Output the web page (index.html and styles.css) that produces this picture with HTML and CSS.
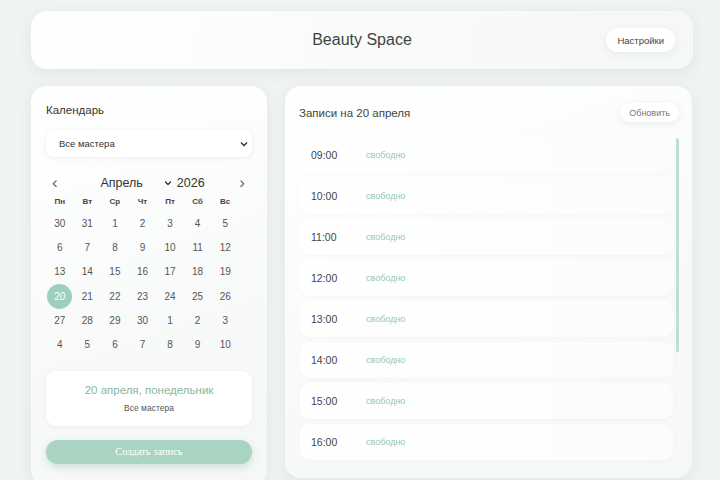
FILE: index.html
```html
<!DOCTYPE html>
<html lang="ru">

<head>
    <meta charset="UTF-8">
    <meta name="viewport" content="width=device-width, initial-scale=1.0">
    <title>Beauty Space</title>
    <link rel="stylesheet" href="styles.css">
</head>

<body>
    <header class="topbar">
        <h1>Beauty Space</h1>
        <button class="pill settings">Настройки</button>
    </header>

    <div class="layout">
        <section class="card calendar-card">
            <h2>Календарь</h2>
            <div class="select">
                <span>Все мастера</span>
                <svg width="8" height="6" viewBox="0 0 8 6"><path d="M1 1.5l3 3 3-3" fill="none" stroke="#333" stroke-width="1.4"/></svg>
            </div>

            <div class="cal-nav">
                <span class="arrow">‹</span>
                <div class="cal-title">
                    <span class="month">Апрель</span>
                    <svg width="8" height="6" viewBox="0 0 8 6"><path d="M1 1.5l3 3 3-3" fill="none" stroke="#333" stroke-width="1.3"/></svg>
                    <span class="year">2026</span>
                </div>
                <span class="arrow">›</span>
            </div>

            <div class="cal-week">
                <div>Пн</div><div>Вт</div><div>Ср</div><div>Чт</div><div>Пт</div><div>Сб</div><div>Вс</div>
            </div>
            <div class="cal-days">
                <div>30</div><div>31</div><div>1</div><div>2</div><div>3</div><div>4</div><div>5</div>
                <div>6</div><div>7</div><div>8</div><div>9</div><div>10</div><div>11</div><div>12</div>
                <div>13</div><div>14</div><div>15</div><div>16</div><div>17</div><div>18</div><div>19</div>
                <div><span class="selected">20</span></div><div>21</div><div>22</div><div>23</div><div>24</div><div>25</div><div>26</div>
                <div>27</div><div>28</div><div>29</div><div>30</div><div>1</div><div>2</div><div>3</div>
                <div>4</div><div>5</div><div>6</div><div>7</div><div>8</div><div>9</div><div>10</div>
            </div>

            <div class="day-info">
                <div class="day-date">20 апреля, понедельник</div>
                <div class="day-master">Все мастера</div>
            </div>

            <button class="create">Создать запись</button>
        </section>

        <section class="card records-card">
            <div class="records-head">
                <h2>Записи на 20 апреля</h2>
                <button class="pill refresh">Обновить</button>
            </div>
            <div class="slots">
                <div class="slot"><span class="time">09:00</span><span class="status">свободно</span></div>
                <div class="slot"><span class="time">10:00</span><span class="status">свободно</span></div>
                <div class="slot"><span class="time">11:00</span><span class="status">свободно</span></div>
                <div class="slot"><span class="time">12:00</span><span class="status">свободно</span></div>
                <div class="slot"><span class="time">13:00</span><span class="status">свободно</span></div>
                <div class="slot"><span class="time">14:00</span><span class="status">свободно</span></div>
                <div class="slot"><span class="time">15:00</span><span class="status">свободно</span></div>
                <div class="slot"><span class="time">16:00</span><span class="status">свободно</span></div>
            </div>
            <div class="scroll-thumb"></div>
        </section>
    </div>
</body>

</html>
```

FILE: styles.css
```css
body {
    font-family: "Liberation Sans", Arial, sans-serif;
    background-color: #eff3f1;
    color: #444;
    margin: 0;
    padding: 11px 27px 0 31px;
    height: 480px;
    box-sizing: border-box;
    overflow: hidden;
}

.topbar {
    height: 58px;
    box-sizing: border-box;
    background: linear-gradient(100deg, #ffffff 0%, #f9fbfa 50%, #f5f8f7 100%);
    border-radius: 16px;
    box-shadow: 0 4px 14px rgba(80, 110, 95, 0.08);
    display: flex;
    align-items: center;
    justify-content: center;
    position: relative;
}

.topbar h1 {
    margin: 0;
    font-size: 16px;
    font-weight: normal;
    color: #3e4442;
}

.pill {
    font-family: "Liberation Sans", Arial, sans-serif;
    background-color: #fff;
    border: none;
    border-radius: 14px;
    box-shadow: 0 2px 8px rgba(80, 110, 95, 0.1);
    color: #444;
    cursor: pointer;
}

.settings {
    position: absolute;
    right: 18px;
    top: 17px;
    height: 24px;
    padding: 0 11px;
    font-size: 9.5px;
}

.layout {
    display: grid;
    grid-template-columns: 236px 407px;
    column-gap: 18px;
    margin-top: 17px;
}

.card {
    background: linear-gradient(160deg, #ffffff 0%, #f8faf9 60%, #f5f8f7 100%);
    border-radius: 16px;
    box-shadow: 0 4px 14px rgba(80, 110, 95, 0.08);
    height: 392px;
    box-sizing: border-box;
    position: relative;
}

.calendar-card {
    padding: 18px 15px 0 15px;
    height: 400px;
}

.card h2 {
    margin: 0;
    font-size: 11.5px;
    font-weight: normal;
    color: #333;
}

.select {
    margin-top: 14px;
    height: 27px;
    background-color: #fff;
    border-radius: 8px;
    box-shadow: 0 1px 5px rgba(80, 110, 95, 0.1);
    display: flex;
    align-items: center;
    justify-content: space-between;
    padding: 0 4px 0 13px;
    font-size: 9.5px;
    color: #333;
}

.cal-nav {
    display: flex;
    justify-content: space-between;
    align-items: center;
    margin-top: 18px;
    padding: 0 7px 0 6px;
    height: 16px;
}

.arrow {
    font-size: 17px;
    color: #666;
    line-height: 16px;
}

.cal-title {
    display: flex;
    align-items: center;
    font-size: 12.5px;
    color: #333;
    margin-left: 8px;
}

.cal-title svg {
    margin: 0 5px 0 21px;
}

.cal-week,
.cal-days {
    width: 193px;
    display: grid;
    grid-template-columns: repeat(7, 1fr);
}

.cal-week {
    margin-top: 3px;
    height: 14px;
    align-items: center;
    text-align: center;
    font-size: 8px;
    font-weight: bold;
    color: #444;
}

.cal-days {
    margin-top: 3px;
    grid-auto-rows: 24.3px;
    font-size: 10px;
    color: #555;
}

.cal-days div {
    display: flex;
    align-items: center;
    justify-content: center;
}

.selected {
    width: 25px;
    height: 25px;
    border-radius: 50%;
    background-color: #9ccfbc;
    color: #fff;
    display: flex;
    align-items: center;
    justify-content: center;
}

.day-info {
    margin-top: 14px;
    height: 55px;
    box-sizing: border-box;
    background-color: #fff;
    border-radius: 10px;
    box-shadow: 0 1px 6px rgba(80, 110, 95, 0.08);
    text-align: center;
    padding-top: 13px;
}

.day-date {
    font-size: 11.5px;
    color: #86b8a3;
}

.day-master {
    font-size: 8.5px;
    color: #555;
    margin-top: 7px;
}

.create {
    margin-top: 14px;
    width: 100%;
    height: 24px;
    border: none;
    border-radius: 12px;
    background-color: #a8d4c1;
    color: #fff;
    font-family: "Liberation Serif", serif;
    font-size: 10.5px;
    box-shadow: 0 3px 8px rgba(100, 160, 135, 0.3);
}

.records-card {
    padding: 17px 14px 0 14px;
}

.records-head {
    display: flex;
    justify-content: space-between;
    align-items: center;
    height: 19px;
}

.records-card h2 {
    margin-top: 1px;
    color: #444;
}

.refresh {
    height: 19px;
    padding: 0 9px;
    font-size: 9px;
    color: #777;
    margin-right: -1px;
}

.slots {
    margin-top: 15px;
    height: 327px;
    overflow: hidden;
    display: flex;
    flex-direction: column;
    gap: 5px;
    padding-right: 5px;
}

.slot {
    flex: 0 0 36px;
    display: flex;
    align-items: center;
    background: linear-gradient(90deg, #ffffff 0%, #fbfcfc 100%);
    border-radius: 10px;
    box-shadow: 0 1px 3px rgba(80, 110, 95, 0.03);
    padding-left: 11px;
    margin-left: 1px;
}

.time {
    width: 55px;
    font-size: 10.5px;
    color: #444;
}

.status {
    font-size: 9px;
    color: #98c8b3;
}

/* thumb of the list's scrollbar */
.scroll-thumb {
    position: absolute;
    left: 391px;
    top: 52px;
    width: 3px;
    height: 214px;
    border-radius: 2px;
    background-color: #c2ded3;
}
```
